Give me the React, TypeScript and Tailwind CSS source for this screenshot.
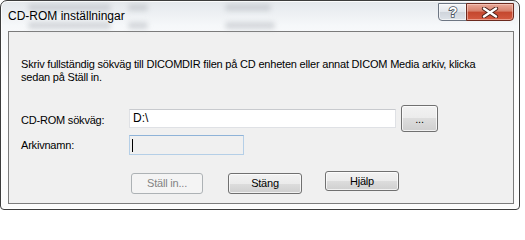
function WinButton({ label, className, disabled }: { label: string; className: string; disabled?: boolean }) {
  if (disabled) {
    return (
      <div className={`flex items-center justify-center rounded-[3px] border border-[#adb2b5] bg-[#f4f4f4] text-[#838383] ${className}`}>
        {label}
      </div>
    );
  }
  return (
    <div
      className={`flex items-center justify-center rounded-[3px] border border-[#707070] bg-[linear-gradient(#f2f2f2_0%,#ebebeb_50%,#dddddd_50%,#cfcfcf_100%)] text-black shadow-[inset_0_0_0_1px_rgba(255,255,255,0.7)] ${className}`}
    >
      {label}
    </div>
  );
}

export default function App() {
  // blurred shapes of the window behind the glass frame
  const blobs = [
    'left-[27px] top-[3px] w-[83px]',
    'left-[127px] top-[3px] w-[20px]',
    'left-[224px] top-[3px] w-[46px]',
    'left-[27px] top-[21px] w-[83px]',
    'left-[127px] top-[21px] w-[20px]',
    'left-[224px] top-[21px] w-[50px]',
  ];

  return (
    <div className="w-[525px] h-[211px] bg-white overflow-hidden font-['Liberation_Sans',Arial,sans-serif]">
      <div className="relative w-[520px] h-[210px] rounded-t-[7px] rounded-b-[4px] border border-[#3c3c3c] bg-[linear-gradient(180deg,#e4e8ec_0%,#f6f8fa_12%,#ffffff_40%,#fbfbfb_100%)] shadow-[inset_0_0_0_1px_rgba(255,255,255,0.85)]">
        {blobs.map((b) => (
          <div key={b} className={`absolute h-[7px] rounded-full bg-[#b4b8be]/50 blur-[2.5px] ${b}`} />
        ))}

        {/* Title bar */}
        <div className="relative flex h-[30px] items-start">
          <div className="mt-[8px] pl-[7px] text-[12px] leading-[15px] text-black">CD-ROM inställningar</div>
          <div className="ml-auto mr-[5px] mt-[2px] flex h-[18px]">
            <div className="flex w-[29px] items-center justify-center rounded-bl-[4px] border border-[#6d7683] bg-[linear-gradient(#f3f5f8_0%,#e2e6eb_50%,#cfd4db_50%,#dde2e8_100%)] shadow-[inset_0_0_0_1px_rgba(255,255,255,0.6)]">
              <svg width="12" height="14" viewBox="0 0 12 14">
                <text
                  x="6"
                  y="12"
                  textAnchor="middle"
                  fontFamily="Liberation Sans, Arial, sans-serif"
                  fontSize="14"
                  fontWeight="bold"
                  fill="#ffffff"
                  stroke="#4b5561"
                  strokeWidth="1.6"
                  paintOrder="stroke"
                >
                  ?
                </text>
              </svg>
            </div>
            <div className="-ml-px flex w-[48px] items-center justify-center rounded-br-[4px] border border-[#6b2a1f] bg-[linear-gradient(#e9a999_0%,#d7806b_45%,#c4472e_50%,#d35a40_100%)] shadow-[inset_0_0_0_1px_rgba(255,220,210,0.5)]">
              <svg width="18" height="11" viewBox="0 0 18 11">
                <path d="M3 1.5 L15 9.5 M15 1.5 L3 9.5" stroke="#4a2018" strokeWidth="4.2" strokeLinecap="round" />
                <path d="M3 1.5 L15 9.5 M15 1.5 L3 9.5" stroke="#ffffff" strokeWidth="2.4" strokeLinecap="round" />
              </svg>
            </div>
          </div>
        </div>

        {/* Client area */}
        <div className="ml-[7px] h-[173px] w-[506px] border border-[#7b7b7b] bg-[#f0f0f0] text-[11px] leading-[13px] tracking-[-0.2px] text-black">
          <p className="ml-[12px] mt-[26px] whitespace-nowrap">
            Skriv fullständig sökväg till DICOMDIR filen på CD enheten eller annat DICOM Media arkiv, klicka
            <br />
            sedan på Ställ in.
          </p>

          <div className="ml-[12px] mt-[21px] flex items-start">
            <div className="mt-[9px] w-[108px]">CD-ROM sökväg:</div>
            <div className="mt-[4px] flex h-[19px] w-[267px] items-center border border-[#dfe1e5] border-t-[#c8cace] bg-white pl-[3px] text-[12px] tracking-normal">
              D:\
            </div>
            <WinButton label="..." className="ml-[5px] h-[27px] w-[37px] items-end pb-[5px]" />
          </div>

          <div className="ml-[12px] mt-[3px] flex items-start">
            <div className="mt-[4px] w-[108px]">Arkivnamn:</div>
            <div className="flex h-[20px] w-[115px] items-center border border-[#b5cfe7] border-t-[#8fb3d8] bg-[#f0f0f0] pl-[2px]">
              <div className="h-[13px] w-px bg-black" />
            </div>
          </div>

          <div className="ml-[122px] mt-[16px] flex items-start">
            <WinButton label="Ställ in..." disabled className="mt-[2px] h-[21px] w-[72px]" />
            <WinButton label="Stäng" className="ml-[25px] mt-[2px] h-[21px] w-[74px]" />
            <WinButton label="Hjälp" className="ml-[23px] h-[20px] w-[74px]" />
          </div>
        </div>
      </div>
    </div>
  );
}
